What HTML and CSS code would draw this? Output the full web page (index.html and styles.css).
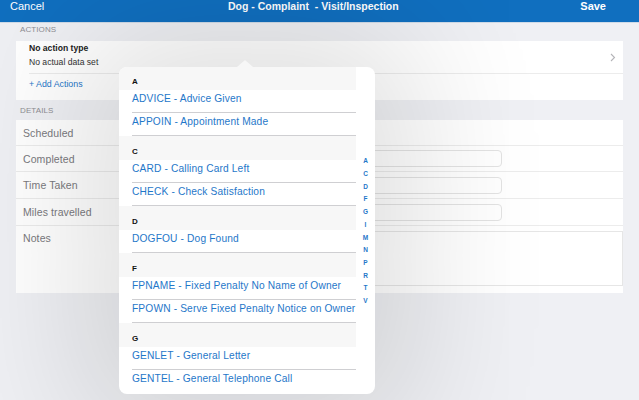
FILE: index.html
```html
<!DOCTYPE html>
<html>
<head>
<meta charset="utf-8">
<link rel="stylesheet" href="styles.css">
</head>
<body>
<header class="nav">
  <span class="nav-btn">Cancel</span>
  <span class="nav-title">Dog - Complaint &nbsp;- Visit/Inspection</span>
  <span class="nav-btn nav-save">Save</span>
</header>
<main class="content">
  <div class="section-label">ACTIONS</div>
  <section class="card">
    <div class="action-row">
      <div class="action-text">
        <div class="action-type">No action type</div>
        <div class="action-data">No actual data set</div>
      </div>
      <svg class="chevron" width="6" height="9" viewBox="0 0 6 9"><path d="M1 1 L4.5 4.5 L1 8" fill="none" stroke="#b4b4b8" stroke-width="1.1"/></svg>
    </div>
    <div class="add-row">+ Add Actions</div>
  </section>
  <div class="section-label details-label">DETAILS</div>
  <section class="card details">
    <div class="drow"><span class="dlabel">Scheduled</span></div>
    <div class="drow"><span class="dlabel">Completed</span><span class="field"></span></div>
    <div class="drow tall"><span class="dlabel">Time Taken</span><span class="field"></span></div>
    <div class="drow tall"><span class="dlabel">Miles travelled</span><span class="field"></span></div>
    <div class="drow notes"><span class="dlabel">Notes</span><span class="notes-box"></span></div>
  </section>
</main>

<div class="popover">
  <div class="arrow"></div>
  <div class="list">
    <div class="hdr">A</div>
    <div class="item">ADVICE - Advice Given</div>
    <div class="item">APPOIN - Appointment Made</div>
    <div class="hdr">C</div>
    <div class="item">CARD - Calling Card Left</div>
    <div class="item">CHECK - Check Satisfaction</div>
    <div class="hdr">D</div>
    <div class="item">DOGFOU - Dog Found</div>
    <div class="hdr">F</div>
    <div class="item">FPNAME - Fixed Penalty No Name of Owner</div>
    <div class="item">FPOWN - Serve Fixed Penalty Notice on Owner</div>
    <div class="hdr">G</div>
    <div class="item">GENLET - General Letter</div>
    <div class="item">GENTEL - General Telephone Call</div>
  </div>
  <div class="index">
    <span>A</span><span>C</span><span>D</span><span>F</span><span>G</span><span>I</span>
    <span>M</span><span>N</span><span>P</span><span>R</span><span>T</span><span>V</span>
  </div>
</div>
</body>
</html>
```

FILE: styles.css
```css
* { box-sizing: border-box; }
html, body { margin: 0; padding: 0; }
body {
  width: 639px;
  height: 400px;
  overflow: hidden;
  background: #eff0f4;
  font-family: "Liberation Sans", Arial, sans-serif;
  position: relative;
}
.nav {
  height: 23px;
  background: #106fbf;
  border-bottom: 1px solid #cfdbe8;
  display: flex;
  align-items: flex-start;
  justify-content: space-between;
  padding: 0 33px 0 10px;
  color: #fff;
  font-size: 11px;
  line-height: 13px;
}
.nav-title {
  font-weight: bold;
  font-size: 10.5px;
  padding-left: 2px;
}
.nav-save { font-weight: bold; }
.content {
  padding: 0 16px;
}
.section-label {
  font-size: 8px;
  line-height: 10px;
  color: #8e8e93;
  padding: 2px 0 6px 4px;
  letter-spacing: 0.1px;
}
.details-label { padding-top: 6px; padding-bottom: 4px; }
.card {
  background: #fff;
}
.action-row {
  margin-left: 13px;
  height: 33px;
  padding-top: 1px;
  border-bottom: 1px solid #ececec;
  display: flex;
  justify-content: space-between;
  align-items: flex-start;
}
.action-type {
  font-size: 8.6px;
  font-weight: bold;
  line-height: 13px;
  color: #222;
}
.action-data {
  font-size: 8.6px;
  line-height: 14px;
  color: #333;
}
.chevron { margin: 11px 7px 0 0; }
.add-row {
  height: 26px;
  padding: 4px 0 0 13px;
  font-size: 8.8px;
  line-height: 12px;
  color: #1f77c9;
}
.details { display: flex; flex-direction: column; }
.drow {
  height: 26px;
  border-bottom: 1px solid #ececec;
  display: flex;
  align-items: center;
  justify-content: space-between;
  padding-left: 7px;
  padding-right: 121px;
}
.drow.tall { height: 27px; }
.dlabel {
  font-size: 10.5px;
  color: #7a7a7e;
  letter-spacing: 0.1px;
}
.field {
  width: 270px;
  height: 17px;
  border: 1px solid #e3e3e3;
  border-radius: 4px;
  background: #fff;
}
.drow.notes {
  height: 67px;
  border-bottom: none;
  align-items: flex-start;
  padding-top: 6px;
  padding-right: 0;
}
.notes-box {
  width: 390px;
  height: 55px;
  margin-top: -1px;
  border: 1px solid #e6e6e6;
  background: #fff;
}

/* popover overlay */
.popover {
  position: absolute;
  left: 119px;
  top: 67px;
  width: 256px;
  height: 327px;
  background: #fff;
  border-radius: 8px;
  box-shadow: 0 0 140px 40px rgba(0, 0, 0, 0.13);
  display: flex;
}
.arrow {
  position: absolute;
  left: 118px;
  top: -7px;
  width: 0;
  height: 0;
  border-left: 8px solid transparent;
  border-right: 8px solid transparent;
  border-bottom: 7px solid #f7f7f7;
}
.list {
  width: 237px;
  height: 100%;
  overflow: hidden;
  border-radius: 8px 0 0 8px;
}
.hdr {
  height: 24px;
  background: #f7f7f7;
  padding: 10px 0 0 13px;
  font-size: 8px;
  font-weight: bold;
  line-height: 12px;
  color: #111;
}
.hdr:first-child { height: 23px; padding-top: 9px; }
.item {
  height: 23px;
  margin-left: 13px;
  padding-top: 2px;
  font-size: 10.2px;
  line-height: 13px;
  letter-spacing: 0.15px;
  color: #1f77c9;
  white-space: nowrap;
  border-bottom: 1px solid #cfcfd2;
}
.item:last-child { border-bottom: none; }
.index {
  flex: 1;
  display: flex;
  flex-direction: column;
  justify-content: center;
  align-items: center;
  padding-top: 2px;
}
.index span {
  font-size: 6.5px;
  font-weight: bold;
  line-height: 12.7px;
  color: #1f77c9;
}
```
